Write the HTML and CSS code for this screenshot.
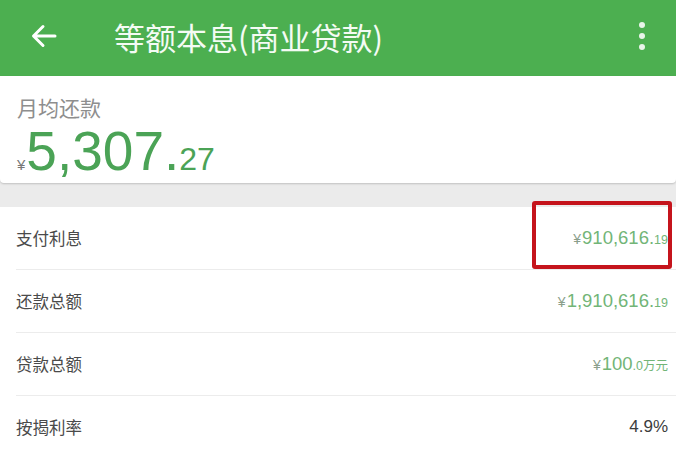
FILE: index.html
```html
<!DOCTYPE html>
<html lang="zh-CN">
<head>
<meta charset="utf-8">
<title>等额本息(商业贷款)</title>
<link rel="stylesheet" href="styles.css">
</head>
<body>
<div class="screen">
  <header class="appbar">
    <svg class="back" width="26" height="24" viewBox="0 0 26 24">
      <path d="M24 12H3M12 2.5L2.5 12L12 21.5" fill="none" stroke="#fff" stroke-width="3" stroke-linecap="round" stroke-linejoin="round"/>
    </svg>
    <h1 class="title">等额本息(商业贷款)</h1>
    <div class="more"><i></i><i></i><i></i></div>
  </header>

  <section class="summary">
    <div class="summary-label">月均还款</div>
    <div class="summary-value"><span class="cur">¥</span><span class="big">5,307.</span><span class="dec">27</span></div>
  </section>

  <ul class="list">
    <li class="row">
      <span class="label">支付利息</span>
      <span class="val green"><span class="y">¥</span>910,616.<span class="d">19</span></span>
      <div class="mark"></div>
    </li>
    <li class="row">
      <span class="label">还款总额</span>
      <span class="val green"><span class="y">¥</span>1,910,616.<span class="d">19</span></span>
    </li>
    <li class="row">
      <span class="label">贷款总额</span>
      <span class="val green"><span class="y">¥</span>100<span class="d">.0万元</span></span>
    </li>
    <li class="row">
      <span class="label">按揭利率</span>
      <span class="val dark">4.9%</span>
    </li>
  </ul>
</div>
</body>
</html>
```
FILE: styles.css
```css
* { box-sizing: border-box; }
html, body {
  margin: 0;
  padding: 0;
  background: #ebebeb;
}
.screen {
  width: 676px;
  height: 451px;
  overflow: hidden;
  background: #ebebeb;
  font-family: "Liberation Sans", "Noto Sans CJK SC", sans-serif;
}
.appbar {
  height: 76px;
  background: #4caf50;
  display: flex;
  align-items: center;
  padding: 0 0 4px 0;
  color: #fff;
}
.back {
  margin-left: 31px;
  flex: none;
}
.title {
  margin: 0 0 0 57px;
  font-family: "Noto Sans CJK SC", sans-serif;
  font-weight: 400;
  font-size: 31px;
  line-height: 1;
  color: #f4fbf4;
  flex: 1;
}
.more {
  display: flex;
  flex-direction: column;
  gap: 5px;
  margin-right: 31px;
}
.more i {
  display: block;
  width: 6px;
  height: 6px;
  border-radius: 50%;
  background: #e8f5e9;
}
.summary {
  height: 107px;
  background: #fff;
  border-radius: 0 0 4px 4px;
  box-shadow: 0 1px 2px rgba(0,0,0,0.18);
  padding: 17px 0 0 17px;
  position: relative;
}
.summary-label {
  font-family: "Noto Sans CJK SC", sans-serif;
  font-size: 21px;
  line-height: 28px;
  color: #8e8e8e;
}
.summary-value {
  margin-top: 2px;
  color: #4ba356;
  line-height: 56px;
  white-space: nowrap;
}
.summary-value .cur {
  font-size: 15px;
  color: #777;
}
.summary-value .big {
  font-size: 55px;
  margin-left: 1px;
}
.summary-value .dec {
  font-size: 32px;
}
.list {
  list-style: none;
  margin: 24px 0 0 0;
  padding: 0 0 0 16px;
  background: #fff;
}
.row {
  height: 63px;
  display: flex;
  align-items: center;
  justify-content: space-between;
  border-bottom: 1px solid #ececec;
  padding-right: 8px;
  position: relative;
}
.label {
  font-family: "Noto Sans CJK SC", sans-serif;
  font-size: 16.5px;
  color: #4a4a4a;
}
.val {
  font-size: 18.5px;
  white-space: nowrap;
}
.val.green { color: #72b577; }
.val.dark { color: #3c3c3c; font-size: 17px; }
.val .y {
  font-size: 14px;
  color: #8a9e8b;
  margin-right: 1px;
}
.val .d {
  font-size: 12.5px;
  font-family: "Liberation Sans", "Noto Sans CJK SC", sans-serif;
}
.mark {
  position: absolute;
  left: 516px;
  top: -6px;
  width: 140px;
  height: 68px;
  border: 4px solid #c5141c;
  border-radius: 3px;
}
```
